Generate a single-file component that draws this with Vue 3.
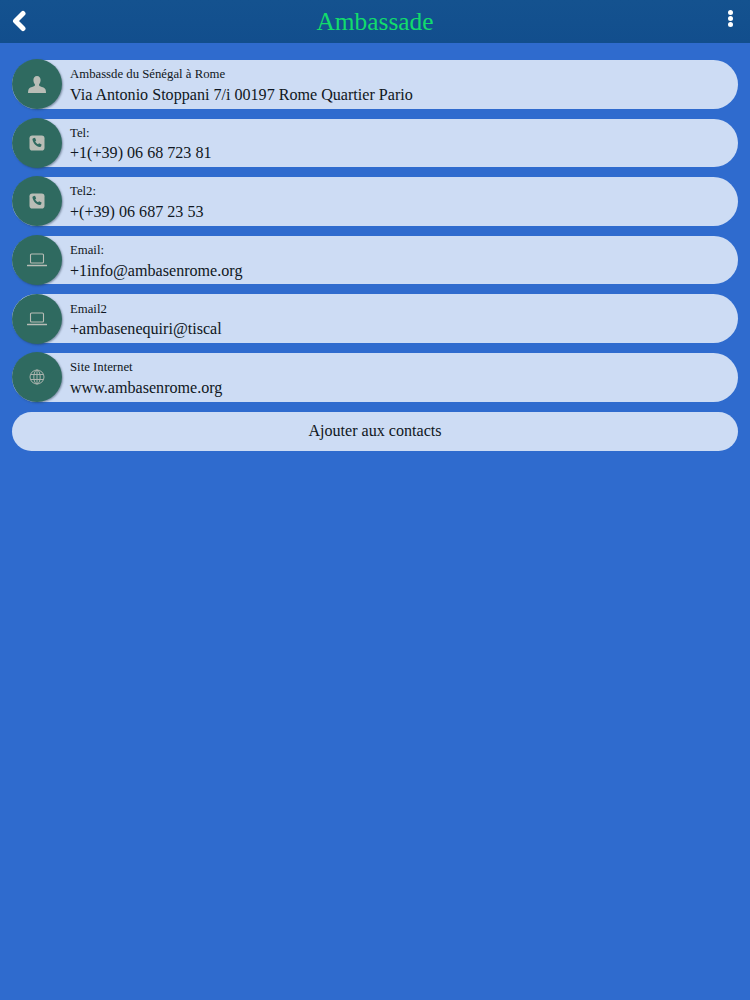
<template>
  <div class="page">
    <header class="top-bar">
      <svg class="back-icon" viewBox="0 0 16 22" width="16" height="22">
        <path d="M12 3.500 L4.500 11 L12 18.500" fill="none" stroke="#fff" stroke-width="5" stroke-linecap="round" stroke-linejoin="round" />
      </svg>
      <h1 class="page-title">Ambassade</h1>
      <div class="menu-dots">
        <span></span>
        <span></span>
        <span></span>
      </div>
    </header>

    <div class="contact-list">
      <div v-for="item in contacts" :key="item.label" class="contact-row">
        <div class="contact-icon">
          <svg v-if="item.icon === 'person'" viewBox="0 0 18 17" width="18" height="17">
            <path d="M9 0c2.300 0 3.600 1.700 3.600 4 0 1.800-.7 3.300-1.500 4.200v1.300c0 1 5.300 1.500 6.300 3.700.4.900.6 2.300.6 3.800H0c0-1.500.2-2.900.6-3.800 1-2.200 6.300-2.700 6.300-3.700V8.200C6.100 7.300 5.400 5.800 5.400 4 5.400 1.700 6.700 0 9 0z" fill="#b9bdb6" />
          </svg>
          <svg v-else-if="item.icon === 'phone'" viewBox="0 0 16 16" width="16" height="16">
            <rect x="0.500" y="0.500" width="15" height="15" rx="2.800" fill="#b9bdb6" />
            <path d="M4.300 3.300l1.700-.5 1.200 2.600-1 .9c.5 1.400 1.500 2.400 2.900 3l.9-1 2.600 1.200-.5 1.700c-.2.600-.8.900-1.400.8C7.300 11.500 4.500 8.700 3.500 4.700c-.1-.6.200-1.200.8-1.400z" fill="#2f6a60" />
          </svg>
          <svg v-else-if="item.icon === 'laptop'" viewBox="0 0 20 14" width="20" height="14">
            <rect x="3.500" y="1" width="13" height="9" rx="1" fill="none" stroke="#b9bdb6" stroke-width="1.100" />
            <path d="M0.500 12.500h19" stroke="#b9bdb6" stroke-width="1.300" stroke-linecap="round" />
          </svg>
          <svg v-else viewBox="0 0 16 16" width="16" height="16" fill="none" stroke="#a9b3ad" stroke-width="1">
            <circle cx="8" cy="8" r="7" />
            <ellipse cx="8" cy="8" rx="3.200" ry="7" />
            <path d="M1.500 5.500h13M1.500 10.500h13M8 1v14" />
          </svg>
        </div>
        <div class="contact-text">
          <label class="contact-label">{{ item.label }}</label>
          <div class="contact-value">{{ item.value }}</div>
        </div>
      </div>
      <button class="add-button">Ajouter aux contacts</button>
    </div>
  </div>
</template>

<script setup>
const contacts = [
  { icon: 'person', label: 'Ambassde du Sénégal à Rome', value: 'Via Antonio Stoppani 7/i 00197 Rome Quartier Pario' },
  { icon: 'phone', label: 'Tel:', value: '+1(+39) 06 68 723 81' },
  { icon: 'phone', label: 'Tel2:', value: '+(+39) 06 687 23 53' },
  { icon: 'laptop', label: 'Email:', value: '+1info@ambasenrome.org' },
  { icon: 'laptop', label: 'Email2', value: '+ambasenequiri@tiscal' },
  { icon: 'globe', label: 'Site Internet', value: 'www.ambasenrome.org' }
];
</script>

<style>
html,
body {
  margin: 0;
  background-color: #2f6bce;
}
</style>

<style scoped>
.page {
  min-height: 1000px;
  background-color: #2f6bce;
  font-family: "Liberation Serif", "DejaVu Serif", serif;
  color: #101722;
}

.top-bar {
  height: 43px;
  display: flex;
  align-items: center;
  justify-content: space-between;
  padding: 0 17px 0 11px;
  background: linear-gradient(#14528f, #124e8d);
}

.back-icon {
  margin-top: -1px;
  margin-right: 6px;
}

.page-title {
  margin: 0;
  font-size: 25.400px;
  font-weight: normal;
  color: #12dc6c;
}

.menu-dots {
  display: flex;
  flex-direction: column;
  gap: 1px;
  width: 16px;
  align-items: flex-end;
  margin-top: -6px;
}

.menu-dots span {
  width: 5px;
  height: 5px;
  border-radius: 50%;
  background-color: #fff;
}

.contact-list {
  display: flex;
  flex-direction: column;
  gap: 10px;
  padding: 17px 12px 0;
}

.contact-row {
  height: 48.600px;
  display: flex;
  align-items: center;
  background-color: #cddcf4;
  border-radius: 25px;
}

.contact-icon {
  flex: 0 0 50px;
  height: 50px;
  display: flex;
  align-items: center;
  justify-content: center;
  border-radius: 50%;
  background-color: #2f6a60;
  box-shadow: 1px 1px 2px rgba(30, 50, 70, 0.45);
}

.contact-text {
  margin-left: 8px;
  padding-top: 2.500px;
  display: flex;
  flex-direction: column;
  gap: 2.500px;
}

.contact-label {
  font-size: 12.750px;
  line-height: 15px;
}

.contact-value {
  font-size: 16.100px;
  line-height: 19px;
}

.add-button {
  height: 39px;
  border: none;
  border-radius: 20px;
  background-color: #cddcf4;
  color: #101722;
  font-family: inherit;
  font-size: 16.100px;
}
</style>
